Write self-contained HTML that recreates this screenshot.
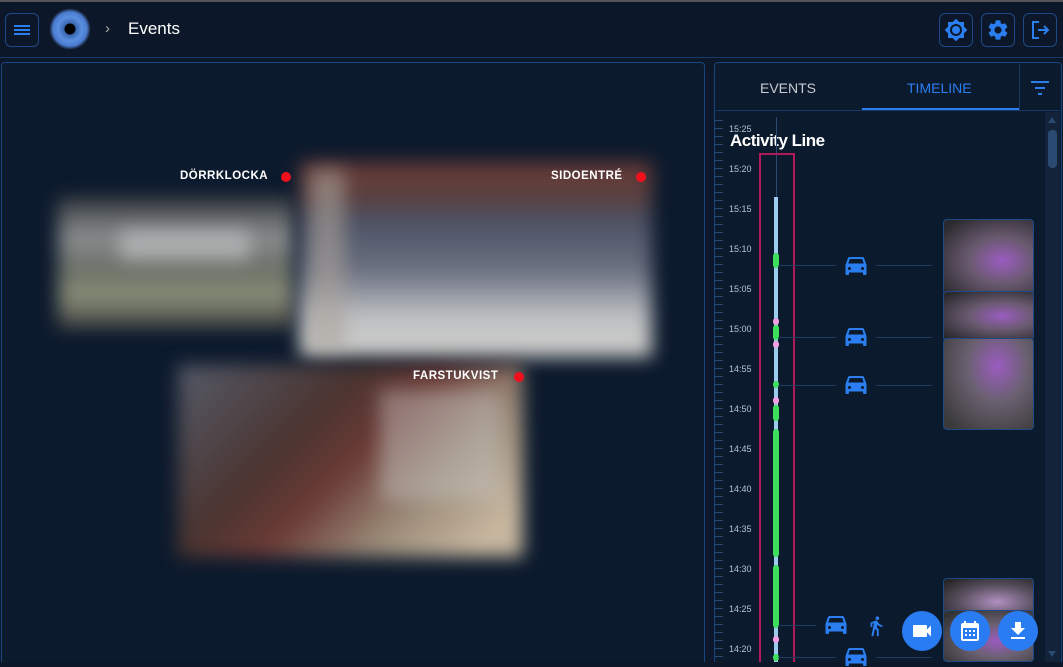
<!DOCTYPE html>
<html><head><meta charset="utf-8"><style>
*{margin:0;padding:0;box-sizing:border-box}
body{width:1063px;height:662px;overflow:hidden;background:#0c1829;font-family:"Liberation Sans",sans-serif;position:relative}
.a{position:absolute}
.btn{position:absolute;border:1px solid #1d4a86;border-radius:6px;background:#0c1829}
.blur{position:absolute;filter:blur(9px)}
.lbl{position:absolute;color:#fff;font-weight:bold;font-size:11.5px;letter-spacing:0.5px}
.dot{position:absolute;width:10px;height:10px;border-radius:50%;background:#f0101e}
.tl{position:absolute;left:729px;font-size:9px;color:#b8c4d4}
.car{position:absolute;width:24px;height:20px}
.hl{position:absolute;height:1px;background:#1f3c60}
.thumb{position:absolute;left:943px;width:91px;border:1px solid #1d4a86;border-radius:4px;overflow:hidden;background:#222}
.fab{position:absolute;width:40px;height:40px;border-radius:50%;background:#2a7cf2;top:611px}
</style></head><body>
<div class="a" style="left:0;top:0;width:1063px;height:2px;background:#555"></div>
<div class="a" style="left:0;top:57px;width:1063px;height:1px;background:#173a66"></div>
<div class="btn" style="left:5px;top:13px;width:34px;height:34px"></div>
<div class="a" style="left:14px;top:25px;width:16px;height:2px;background:#2b7ef0;box-shadow:0 4px 0 #2b7ef0,0 8px 0 #2b7ef0"></div>
<div class="a" style="left:49px;top:8px;width:42px;height:42px;border-radius:50%;background:radial-gradient(circle,#000 0 5px,#3a66b0 6px,#5a8fe0 12px,#4a7cd0 17px,#0a0f1a 21px)"></div>
<div class="a" style="left:105px;top:20px;color:#aaa;font-size:15px">›</div>
<div class="a" style="left:128px;top:19px;color:#fff;font-size:17px">Events</div>
<div class="btn" style="left:939px;top:13px;width:34px;height:34px"></div>
<div class="btn" style="left:981px;top:13px;width:34px;height:34px"></div>
<div class="btn" style="left:1023px;top:13px;width:34px;height:34px"></div>
<svg class="a" style="left:944px;top:18px" width="24" height="24" viewBox="0 0 24 24"><path fill="#2b7ef0" d="M20 8.69V4h-4.69L12 .69 8.69 4H4v4.69L.69 12 4 15.31V20h4.69L12 23.31 15.31 20H20v-4.69L23.31 12 20 8.69zM12 18c-3.31 0-6-2.69-6-6s2.69-6 6-6 6 2.690 6 6-2.69 6-6 6zm0-10c-2.21 0-4 1.79-4 4s1.79 4 4 4 4-1.79 4-4-1.79-4-4-4z"/></svg>
<svg class="a" style="left:986px;top:18px" width="24" height="24" viewBox="0 0 24 24"><path fill="#2b7ef0" d="M19.14 12.94c.04-.3.06-.61.06-.94 0-.32-.02-.64-.07-.94l2.03-1.58a.49.49 0 00.12-.61l-1.92-3.32a.49.49 0 00-.59-.22l-2.39.96c-.5-.38-1.03-.7-1.620-.94l-.36-2.54a.48.48 0 00-.48-.41h-3.84c-.24 0-.43.17-.47.41l-.36 2.54c-.59.24-1.13.57-1.62.94l-2.39-.96a.49.49 0 00-.59.22L2.74 8.87c-.12.21-.08.47.12.61l2.03 1.58c-.05.3-.09.63-.09.94s.02.64.07.94l-2.03 1.58a.49.49 0 00-.12.61l1.92 3.32c.12.22.37.29.59.22l2.39-.96c.5.38 1.03.7 1.62.94l.36 2.54c.05.24.24.41.48.41h3.84c.24 0 .44-.17.47-.41l.36-2.54c.59-.24 1.13-.56 1.62-.94l2.39.96c.22.08.47 0 .59-.22l1.92-3.32c.12-.22.07-.47-.12-.61l-2.01-1.58zM12 15.6A3.6 3.6 0 1112 8.4a3.6 3.6 0 010 7.2z"/></svg>
<svg class="a" style="left:1028px;top:18px" width="24" height="24" viewBox="0 0 24 24"><path fill="none" stroke="#2b7ef0" stroke-width="2" d="M11 4H5v16h6M10 12h10M16 8l4 4-4 4"/></svg>

<div class="a" style="left:1px;top:62px;width:704px;height:600px;border:1.5px solid #17457f;border-bottom:none;border-radius:4px 4px 0 0;background:#0c1a2d"></div>
<div class="a" style="left:714px;top:62px;width:348px;height:600px;border:1.5px solid #17457f;border-bottom:none;border-radius:4px 4px 0 0;background:#0c1a2d"></div>

<div class="blur" style="left:58px;top:198px;width:236px;height:130px;background:linear-gradient(180deg,#3a3d40 0%,#8a8e90 30%,#6a6e66 55%,#8a8f78 75%,#444 100%)"></div>
<div class="blur" style="left:120px;top:230px;width:130px;height:30px;background:#c8cccc;opacity:.6"></div>
<div class="blur" style="left:300px;top:162px;width:352px;height:195px;background:linear-gradient(180deg,#6a3a35 0%,#5a4040 18%,#4c5264 30%,#6a7080 55%,#c0c2c4 80%,#d0d0cc 100%)"></div>
<div class="blur" style="left:310px;top:170px;width:35px;height:180px;background:#aaa29a;opacity:.6"></div>
<div class="blur" style="left:178px;top:365px;width:345px;height:192px;background:linear-gradient(135deg,#555b68 0%,#4a3430 35%,#6a3a35 50%,#9a8a78 70%,#c8b8a0 90%)"></div>
<div class="blur" style="left:380px;top:390px;width:120px;height:110px;background:#c8c6c4;opacity:.45"></div>

<div class="lbl" style="left:180px;top:170px">DÖRRKLOCKA</div><div class="dot" style="left:281px;top:172px"></div>
<div class="lbl" style="left:551px;top:170px">SIDOENTRÉ</div><div class="dot" style="left:636px;top:172px"></div>
<div class="lbl" style="left:413px;top:370px">FARSTUKVIST</div><div class="dot" style="left:514px;top:372px"></div>

<div class="a" style="left:760px;top:80px;color:#c8ccd4;font-size:14px">EVENTS</div>
<div class="a" style="left:907px;top:80px;color:#2b7ef0;font-size:14px">TIMELINE</div>
<div class="a" style="left:862px;top:108px;width:158px;height:2px;background:#2b7ef0"></div>
<div class="a" style="left:716px;top:110px;width:344px;height:1px;background:#173a66"></div>
<div class="a" style="left:1019px;top:64px;width:1px;height:46px;background:#173a66"></div>
<div class="a" style="left:1031px;top:81px;width:18px;height:2px;background:#2b7ef0"></div>
<div class="a" style="left:1035px;top:87px;width:10px;height:2px;background:#2b7ef0"></div>
<div class="a" style="left:1038px;top:93px;width:4px;height:2px;background:#2b7ef0"></div>

<div class="a" style="left:1045px;top:112px;width:15px;height:550px;background:#12233a"></div>
<div class="a" style="left:1048px;top:130px;width:9px;height:38px;border-radius:4px;background:#2a4a72"></div>
<div class="a" style="left:1048px;top:117px;width:0;height:0;border:4px solid transparent;border-bottom:6px solid #2a4a72;border-top:none"></div>
<div class="a" style="left:1048px;top:651px;width:0;height:0;border:4px solid transparent;border-top:6px solid #2a4a72;border-bottom:none"></div>

<div class="a" style="left:715px;top:113px;width:8px;height:549px;background:repeating-linear-gradient(180deg,transparent 0 7px,#2a4a72 7px 8px)"></div>
<div class="tl" style="top:124px">15:25</div><div class="tl" style="top:164px">15:20</div><div class="tl" style="top:204px">15:15</div><div class="tl" style="top:244px">15:10</div><div class="tl" style="top:284px">15:05</div><div class="tl" style="top:324px">15:00</div><div class="tl" style="top:364px">14:55</div><div class="tl" style="top:404px">14:50</div><div class="tl" style="top:444px">14:45</div><div class="tl" style="top:484px">14:40</div><div class="tl" style="top:524px">14:35</div><div class="tl" style="top:564px">14:30</div><div class="tl" style="top:604px">14:25</div><div class="tl" style="top:644px">14:20</div>
<div class="a" style="left:730px;top:131px;color:#fff;font-size:17px;font-weight:bold;letter-spacing:-0.5px">Activity Line</div>

<div class="a" style="left:776px;top:117px;width:1px;height:80px;background:#2a4a72"></div>
<div class="a" style="left:774px;top:197px;width:4px;height:465px;background:#9ccbf0"></div>
<div class="a" style="left:773px;top:253px;width:6px;height:15px;border-radius:3px;background:#3de05a"></div>
<div class="a" style="left:773px;top:318px;width:6px;height:7px;border-radius:3px;background:#f0a0e0"></div>
<div class="a" style="left:773px;top:325px;width:6px;height:15px;border-radius:3px;background:#3de05a"></div>
<div class="a" style="left:773px;top:341px;width:6px;height:7px;border-radius:3px;background:#f0a0e0"></div>
<div class="a" style="left:773px;top:381px;width:6px;height:7px;border-radius:3px;background:#3de05a"></div>
<div class="a" style="left:773px;top:397px;width:6px;height:7px;border-radius:3px;background:#f0a0e0"></div>
<div class="a" style="left:773px;top:405px;width:6px;height:16px;border-radius:3px;background:#3de05a"></div>
<div class="a" style="left:773px;top:429px;width:6px;height:128px;border-radius:3px;background:#3de05a"></div>
<div class="a" style="left:773px;top:565px;width:6px;height:63px;border-radius:3px;background:#3de05a"></div>
<div class="a" style="left:773px;top:636px;width:6px;height:7px;border-radius:3px;background:#f0a0e0"></div>
<div class="a" style="left:773px;top:654px;width:6px;height:7px;border-radius:3px;background:#3de05a"></div>
<div class="a" style="left:759px;top:153px;width:36px;height:509px;border:2px solid #b0195a;border-bottom:none"></div>

<div class="hl" style="left:778px;top:265px;width:58px"></div><div class="hl" style="left:876px;top:265px;width:56px"></div>
<div class="hl" style="left:778px;top:337px;width:58px"></div><div class="hl" style="left:876px;top:337px;width:56px"></div>
<div class="hl" style="left:778px;top:385px;width:58px"></div><div class="hl" style="left:876px;top:385px;width:56px"></div>
<div class="hl" style="left:778px;top:625px;width:38px"></div>
<div class="hl" style="left:778px;top:657px;width:58px"></div><div class="hl" style="left:876px;top:657px;width:56px"></div>

<svg width="0" height="0" style="position:absolute"><defs><symbol id="c" viewBox="0 0 24 20"><path fill="#2b7ef0" d="M20 2c-.2-.6-.8-1-1.5-1h-13C4.8 1 4.3 1.4 4 2L1.5 9v9c0 .6.4 1 1 1h1.5c.6 0 1-.4 1-1v-1.5h14V18c0 .6.4 1 1 1h1.5c.6 0 1-.4 1-1V9L20 2zM5.8 3h12.4l1.5 4.5H4.3L5.8 3zM5.5 14a1.5 1.5 0 110-3 1.5 1.5 0 010 3zm13 0a1.5 1.5 0 110-3 1.5 1.5 0 010 3z"/></symbol></defs></svg>
<svg class="car" style="left:844px;top:256px"><use href="#c"/></svg>
<svg class="car" style="left:844px;top:327px"><use href="#c"/></svg>
<svg class="car" style="left:844px;top:375px"><use href="#c"/></svg>
<svg class="car" style="left:824px;top:615px"><use href="#c"/></svg>
<svg class="car" style="left:844px;top:647px"><use href="#c"/></svg>
<svg class="a" style="left:865px;top:611px" width="22" height="30" viewBox="0 0 24 24"><path fill="#2b7ef0" d="M13.5 5.5c1.1 0 2-.9 2-2s-.9-2-2-2-2 .9-2 2 .9 2 2 2zM9.8 8.9L7 23h2.1l1.8-8 2.1 2v6h2v-7.5l-2.1-2 .6-3C14.8 12 16.8 13 19 13v-2c-1.9 0-3.5-1-4.3-2.4l-1-1.6c-.4-.6-1-1-1.7-1-.3 0-.5.1-.8.1L6 8.3V13h2V9.6l1.8-.7"/></svg>

<div class="thumb" style="top:219px;height:76px;background:radial-gradient(ellipse at 65% 55%,#9a5cc0 0,#6a5a70 40%,#2a2a2e 90%)"></div>
<div class="thumb" style="top:291px;height:50px;background:radial-gradient(ellipse at 65% 50%,#9a5cc0 0,#6a5a70 40%,#2a2a2e 90%)"></div>
<div class="thumb" style="top:338px;height:92px;background:radial-gradient(ellipse at 60% 30%,#9a5cc0 0,#6a6070 40%,#3a3a3a 90%)"></div>
<div class="thumb" style="top:578px;height:40px;background:radial-gradient(ellipse at 60% 60%,#b090c0 0,#5a5060 50%,#222 95%)"></div>
<div class="thumb" style="top:610px;height:52px;background:radial-gradient(ellipse at 60% 60%,#9a5cc0 0,#6a6070 40%,#333 90%)"></div>

<div class="fab" style="left:902px"></div>
<div class="fab" style="left:950px"></div>
<div class="fab" style="left:998px"></div>
<svg class="a" style="left:910px;top:619px" width="24" height="24" viewBox="0 0 24 24"><path fill="#fff" d="M17 10.5V7c0-.55-.45-1-1-1H4c-.55 0-1 .45-1 1v10c0 .55.45 1 1 1h12c.55 0 1-.45 1-1v-3.5l4 4v-11l-4 4z"/></svg>
<svg class="a" style="left:958px;top:619px" width="24" height="24" viewBox="0 0 24 24"><path fill="#fff" d="M19 4h-1V2h-2v2H8V2H6v2H5c-1.1 0-2 .9-2 2v14c0 1.1.9 2 2 2h14c1.1 0 2-.9 2-2V6c0-1.1-.9-2-2-2zm0 16H5V9h14v11zM7 11h2v2H7zm4 0h2v2h-2zm4 0h2v2h-2zM7 15h2v2H7zm4 0h2v2h-2zm4 0h2v2h-2z"/></svg>
<svg class="a" style="left:1006px;top:619px" width="24" height="24" viewBox="0 0 24 24"><path fill="#fff" d="M19 9h-4V3H9v6H5l7 7 7-7zM5 18v2h14v-2H5z"/></svg>
</body></html>
